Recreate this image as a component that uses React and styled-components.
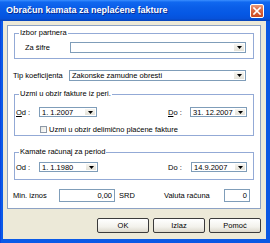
import React from 'react';
import styled, { createGlobalStyle } from 'styled-components';

const Global = createGlobalStyle`
  html, body { margin: 0; padding: 0; background: #ECE9D8; }
  body { font-family: "Liberation Sans", Arial, sans-serif; font-size: 7.5px; color: #000; }
  #root { width: 270px; height: 243px; }
`;

const Window = styled.div`
  width: 270px;
  height: 243px;
  display: flex;
  flex-direction: column;
  background: linear-gradient(90deg, #0831D9 0px, #0A5AE8 1px, #0B58E3 100%);
  overflow: hidden;
`;

const TitleBar = styled.div`
  flex: none;
  height: 21px;
  display: flex;
  align-items: center;
  justify-content: space-between;
  padding: 0 6px 0 6px;
  background: linear-gradient(180deg, #3B8FFF 0%, #1068F0 10%, #0A5EE8 35%, #0558E5 65%, #0652DB 88%, #0843B8 100%);
`;

const Title = styled.span`
  color: #fff;
  font: bold 9px/1 "Liberation Sans", Arial, sans-serif;
  text-shadow: 1px 1px 0 #0B2B8E;
  letter-spacing: 0;
`;

const CloseBtn = styled.div`
  width: 14px;
  height: 14px;
  box-sizing: border-box;
  border: 1px solid #fff;
  border-radius: 2px;
  background: linear-gradient(180deg, #E89A7C 0%, #DD6B45 40%, #C9481F 100%);
  display: flex;
  align-items: center;
  justify-content: center;
`;

const Body = styled.div`
  flex: 1;
  margin: 0 4px 4px 3px;
  background: #ECE9D8;
  padding: 4px 5px 6px 4px;
  display: flex;
  flex-direction: column;
`;

const Frame = styled.div`
  border: 1px solid #8DA2C4;
  background: #fff;
  display: flex;
  flex-direction: column;
  padding: 0 0 6px 0;
`;

const Group = styled.fieldset`
  margin: ${p => p.$mt}px 6px 0 6px;
  padding: ${p => p.$pt}px 0 ${p => p.$pb}px 0;
  border: 1px solid #93AAD6;
  min-width: 0;
  display: flex;
  flex-direction: column;
`;

const Legend = styled.legend`
  margin-left: 4px;
  padding: 0 1px;
  line-height: 8px;
  font-size: 7.5px;
`;

const Row = styled.div`
  display: flex;
  align-items: center;
  padding: 0 ${p => p.$pr || 0}px 0 ${p => p.$pl || 0}px;
  margin-top: ${p => p.$mt || 0}px;
  justify-content: ${p => p.$spread ? 'space-between' : 'flex-start'};
  line-height: 9px;
`;

const Pair = styled.div`
  display: flex;
  align-items: center;
`;

const Label = styled.span`
  width: ${p => p.$w}px;
  flex: none;
  white-space: nowrap;
`;

const Key = styled.u`
  text-decoration: underline;
  text-underline-offset: 1px;
`;

const Field = styled.div`
  box-sizing: border-box;
  width: ${p => p.$w}px;
  height: ${p => p.$h}px;
  border: 1px solid #7F9DB9;
  background: #fff;
  display: flex;
  align-items: stretch;
  flex: none;
`;

const Value = styled.span`
  flex: 1;
  display: flex;
  align-items: center;
  justify-content: ${p => p.$right ? 'flex-end' : 'flex-start'};
  padding: 0 ${p => p.$right ? 2 : 0}px 0 ${p => p.$right ? 0 : 2}px;
  white-space: nowrap;
  overflow: hidden;
`;

const ArrowBtn = styled.span`
  width: 10px;
  flex: none;
  margin: 1px;
  background: linear-gradient(180deg, #F6F5F0 0%, #E4E2D8 100%);
  display: flex;
  align-items: center;
  justify-content: center;
`;

const Suffix = styled.span`
  margin-left: 4px;
`;

const CheckBox = styled.span`
  width: 7px;
  height: 7px;
  box-sizing: border-box;
  border: 1px solid #8D99A8;
  background: linear-gradient(135deg, #E6E6DE 0%, #FFFFFF 100%);
  margin-right: 2px;
  flex: none;
`;

const Buttons = styled.div`
  display: flex;
  justify-content: flex-end;
  gap: 4px;
  margin-top: 9px;
`;

const Button = styled.div`
  width: 52px;
  height: 15px;
  box-sizing: border-box;
  border: 1px solid #3B3B3B;
  border-radius: 2px;
  background: linear-gradient(180deg, #FFFFFF 0%, #F3F2EC 60%, #DCD8CC 100%);
  display: flex;
  align-items: center;
  justify-content: center;
  font-size: 7.5px;
`;

const Arrow = () => (
  <svg width="5" height="3" viewBox="0 0 5 3"><path d="M0 0h5L2.5 3z" fill="#000" /></svg>
);

const Combo = ({ w, h, children }) => (
  <Field $w={w} $h={h}>
    <Value>{children}</Value>
    <ArrowBtn><Arrow /></ArrowBtn>
  </Field>
);

export default function App() {
  return (
    <>
      <Global />
      <Window>
        <TitleBar>
          <Title>Obračun kamata za neplaćene fakture</Title>
          <CloseBtn>
            <svg width="8" height="8" viewBox="0 0 8 8">
              <path d="M1 1L7 7M7 1L1 7" stroke="#fff" strokeWidth="1.6" strokeLinecap="square" />
            </svg>
          </CloseBtn>
        </TitleBar>
        <Body>
          <Frame>
            <Group $mt={3} $pt={5} $pb={5}>
              <Legend>Izbor partnera</Legend>
              <Row $pl={10}>
                <Label $w={45}>Za šifre</Label>
                <Combo w={176} h={11}></Combo>
              </Row>
            </Group>
            <Row $pl={5} $mt={11}>
              <Label $w={56}>Tip koeficijenta</Label>
              <Combo w={177} h={11}>Zakonske zamudne obresti</Combo>
            </Row>
            <Group $mt={9} $pt={9} $pb={1}>
              <Legend>Uzmi u obzir fakture iz peri.</Legend>
              <Row $pl={1} $pr={6} $spread>
                <Pair>
                  <Label $w={23}><Key>O</Key>d :</Label>
                  <Combo w={58} h={10}>1. 1.2007</Combo>
                </Pair>
                <Pair>
                  <Label $w={22}><Key>D</Key>o :</Label>
                  <Combo w={57} h={10}>31. 12.2007</Combo>
                </Pair>
              </Row>
              <Row $pl={25} $mt={8}>
                <CheckBox />
                <span>Uzmi u obzir delimično plaćene fakture</span>
              </Row>
            </Group>
            <Group $mt={12} $pt={6} $pb={7}>
              <Legend>Kamate računaj za period</Legend>
              <Row $pl={1} $pr={6} $spread>
                <Pair>
                  <Label $w={23}>Od :</Label>
                  <Combo w={59} h={10}>1. 1.1980</Combo>
                </Pair>
                <Pair>
                  <Label $w={23}>Do :</Label>
                  <Combo w={56} h={10}>14.9.2007</Combo>
                </Pair>
              </Row>
            </Group>
            <Row $pl={5} $pr={10} $mt={9} $spread>
              <Pair>
                <Label $w={46}>Min. iznos</Label>
                <Field $w={56} $h={13}><Value $right>0,00</Value></Field>
                <Suffix>SRD</Suffix>
              </Pair>
              <Pair>
                <Label $w={60}>Valuta računa</Label>
                <Field $w={26} $h={13}><Value $right>0</Value></Field>
              </Pair>
            </Row>
          </Frame>
          <Buttons>
            <Button>OK</Button>
            <Button>Izlaz</Button>
            <Button>Pomoć</Button>
          </Buttons>
        </Body>
      </Window>
    </>
  );
}
